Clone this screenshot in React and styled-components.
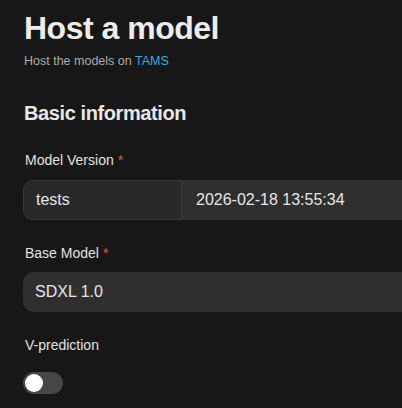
import styled, { createGlobalStyle } from 'styled-components'

const Global = createGlobalStyle`
    body {
        margin: 0;
        background: #171717;
        font-family: "Liberation Sans", Arial, sans-serif;
        overflow: hidden;
    }
`
const Page = styled.div`
    width: 760px;
    padding: 12px 24px 0;
    display: flex;
    flex-direction: column;
`
const Title = styled.h1`
    margin: 0;
    font-size: 32px;
    line-height: 1;
    font-weight: 700;
    letter-spacing: -0.5px;
    color: #ececec;
`
const Subtitle = styled.p`
    margin: 11px 0 0;
    font-size: 12.5px;
    line-height: 1;
    color: #ababab;
`
const Link = styled.a`
    color: #3aa9e0;
    text-decoration: none;
`
const Section = styled.h2`
    margin: 35px 0 0;
    font-size: 20px;
    line-height: 1;
    font-weight: 700;
    letter-spacing: -0.4px;
    color: #e8e8e8;
`
const Form = styled.div`
    margin-top: 30px;
    display: flex;
    flex-direction: column;
    gap: 26px;
`
const Field = styled.div`
    display: flex;
    flex-direction: column;
    gap: ${p => p.$gap || 13}px;
`
const Label = styled.label`
    padding-left: 1px;
    font-size: 14px;
    line-height: 1;
    color: #e2e2e2;
`
const Required = styled.span`
    color: #e05858;
    margin-left: 4px;
`
const Group = styled.div`
    display: flex;
    height: 40px;
    margin-left: -1px;
    border-radius: 10px;
    overflow: hidden;
    background: #2f2f2f;
`
const Addon = styled.div`
    width: 159px;
    box-sizing: border-box;
    display: flex;
    align-items: center;
    padding-left: 12px;
    background: #282828;
    border: 1px solid #3a3a3a;
    border-radius: 10px 0 0 10px;
    font-size: 16px;
    color: #e6e6e6;
`
const Value = styled.div`
    flex: 1;
    display: flex;
    align-items: center;
    padding-left: ${p => p.$pad || 14}px;
    font-size: 16px;
    color: #e6e6e6;
`
const Switch = styled.div`
    width: 40px;
    height: 22px;
    margin-left: -1px;
    box-sizing: border-box;
    padding: 2px;
    border-radius: 11px;
    background: #474747;
`
const Knob = styled.div`
    width: 18px;
    height: 18px;
    border-radius: 50%;
    background: #fff;
`

export default function App() {
    return (
        <>
            <Global />
            <Page>
                <Title>Host a model</Title>
                <Subtitle>Host the models on <Link>TAMS</Link></Subtitle>
                <Section>Basic information</Section>
                <Form>
                    <Field>
                        <Label>Model Version<Required>*</Required></Label>
                        <Group>
                            <Addon>tests</Addon>
                            <Value>2026-02-18 13:55:34</Value>
                        </Group>
                    </Field>
                    <Field $gap={12}>
                        <Label>Base Model<Required>*</Required></Label>
                        <Group>
                            <Value $pad={12}>SDXL 1.0</Value>
                        </Group>
                    </Field>
                    <Field $gap={20}>
                        <Label>V-prediction</Label>
                        <Switch><Knob /></Switch>
                    </Field>
                </Form>
            </Page>
        </>
    )
}
